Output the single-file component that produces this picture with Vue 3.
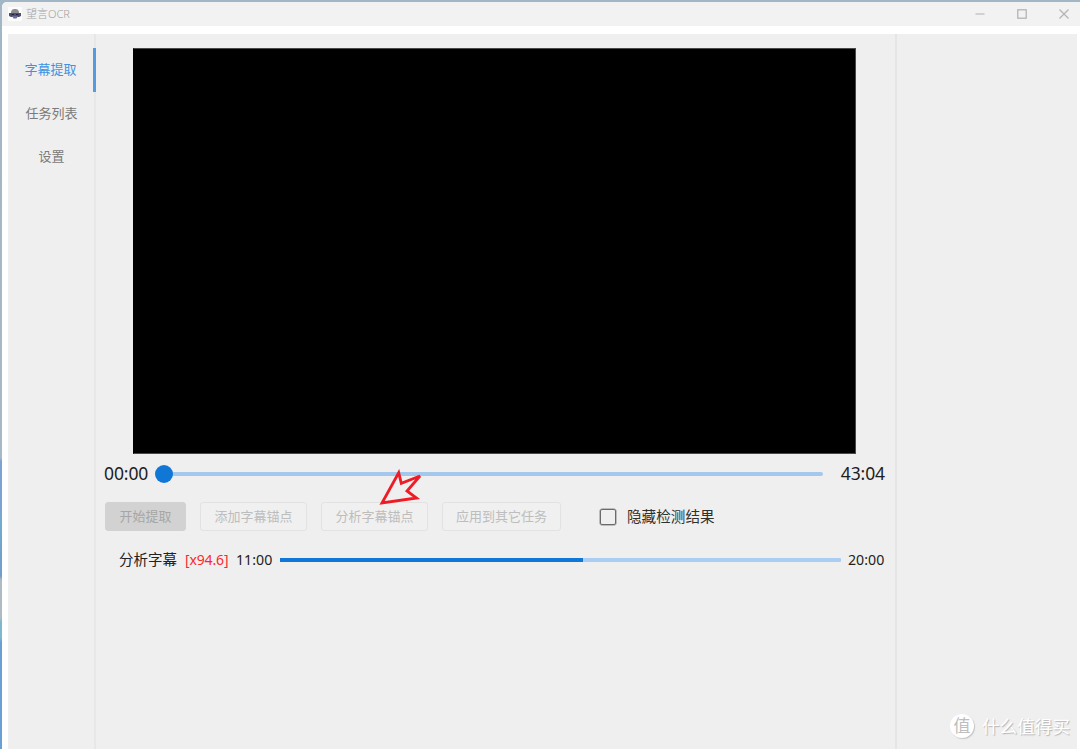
<script setup>
const nav = ['字幕提取', '任务列表', '设置']
const actions = [
  { label: '开始提取', kind: 'start' },
  { label: '添加字幕锚点', kind: 'add' },
  { label: '分析字幕锚点', kind: 'analyse' },
  { label: '应用到其它任务', kind: 'apply' },
]
const progress = 54
</script>

<template>
  <div class="desktop">
    <div class="window">
      <header class="titlebar">
        <svg class="logo" viewBox="0 0 14 14">
          <rect width="14" height="14" rx="1" fill="#fcfcfc" />
          <path d="M3 6C3 2.500 5 2 7 2s4 .5 4 4z" fill="#8d8d91" />
          <path d="M1 6h12v3l-2 1H3L1 9z" fill="#505064" />
          <path d="M4 9h6l-1.500 2.500h-3z" fill="#6d6d9c" />
          <path d="M3.500 7.500h2.500M8 7.500h2.500" stroke="#24244e" />
        </svg>
        <span class="title">望言OCR</span>
        <div class="controls">
          <svg viewBox="0 0 12 12"><path d="M1.500 6h9" stroke="#c6c6c6" /></svg>
          <svg viewBox="0 0 12 12"><rect x="1.800" y="1.800" width="8.400" height="8.400" /></svg>
          <svg viewBox="0 0 12 12"><path d="M1.500 1.500l9 9M10.500 1.500l-9 9" /></svg>
        </div>
      </header>

      <div class="body">
        <nav class="sidebar">
          <div v-for="(item, i) in nav" :key="item" class="nav-item" :class="{ active: i === 0 }">
            <span>{{ item }}</span>
          </div>
        </nav>

        <main class="main">
          <div class="video"></div>
          <div class="seek">
            <span class="time">00:00</span>
            <div class="seek-track"><i class="thumb"></i></div>
            <span class="time">43:04</span>
          </div>
          <div class="actions">
            <button v-for="a in actions" :key="a.label" class="btn" :class="a.kind" disabled>{{ a.label }}</button>
            <label class="check"><i class="box"></i><span>隐藏检测结果</span></label>
            <svg class="arrow" viewBox="0 0 44 36">
              <path d="M20.700 3.700L23.300 14.300L42 7L29 22L38.500 29L4 34Z" />
            </svg>
          </div>
          <div class="analysis">
            <span class="name">分析字幕</span>
            <span class="speed">[x94.6]</span>
            <span class="start-time">11:00</span>
            <div class="bar"><i :style="{ width: progress + '%' }"></i></div>
            <span class="end-time">20:00</span>
          </div>
        </main>
        <aside class="results"></aside>
      </div>
    </div>
    <div class="watermark"><span class="seal">值</span><span class="brand">什么值得买</span></div>
  </div>
</template>

<style>
body { overflow: hidden; }
</style>

<style scoped>
* { box-sizing: border-box; }
.desktop {
  position: relative;
  width: 1080px;
  height: 749px;
  padding: 2px 0 0 2px;
  overflow: hidden;
  background: linear-gradient(#a3b6c5 0, #a9b8c5 458px, #7da3d2 461px, #7da3d2 513px, #72accd 517px, #729dcb 576px, #b0bac2 580px, #b0bac2 618px, #7fb7cf 622px, #7fb7cf 638px, #6a9fd4 642px);
  font-family: "Noto Sans", "Noto Sans CJK SC", sans-serif;
}
.window {
  display: flex;
  flex-direction: column;
  height: 747px;
  background: #fff;
  border-radius: 5px 0 0 0;
  overflow: hidden;
}
.titlebar {
  display: flex;
  align-items: center;
  height: 24px;
  flex: none;
  background: #f2f2f2;
  padding-left: 6px;
}
.logo { width: 14px; height: 14px; margin-right: 4px; }
.title { font-size: 11px; line-height: 16px; font-weight: 300; color: #a3a3a3; }
.controls { display: flex; gap: 30px; margin-left: auto; padding-right: 10.5px; }
.controls svg { width: 12px; height: 12px; fill: none; stroke: #b4b4b4; stroke-width: 1.3; }
.body {
  display: flex;
  flex: 1;
  margin: 8px 3px 0 6px;
  background: #efefef;
}
.sidebar { width: 88px; padding-top: 14px; border-right: 2px solid #e7e7e7; flex: none; }
.nav-item {
  display: flex;
  align-items: center;
  justify-content: center;
  height: 43.5px;
  margin-right: -2px;
  padding: 0 1px 2px 0;
  font-size: 13px;
  color: #7a7a7a;
}
.nav-item.active { color: #3d93e2; border-right: 3px solid #559bdf; padding-right: 0; }
.main { width: 801px; border-right: 2px solid #e5e5e5; flex: none; }
.video {
  width: 723px;
  height: 406px;
  margin: 14px 0 0 37px;
  background: #000;
  border: 1px solid #4a4a4a;
  border-left-color: #000;
}
.seek { display: flex; align-items: center; height: 40px; padding: 0 10px 0 9px; }
.time { width: 46px; padding-bottom: 2px; font-size: 17.5px; letter-spacing: -0.1px; color: #1d1d1d; white-space: nowrap; flex: none; }
.time:first-child { margin-left: -1px; }
.time:last-child { display: flex; justify-content: flex-end; }
.seek-track {
  position: relative;
  width: 659px;
  height: 4px;
  margin: 0 auto 0 14px;
  background: #a3c8eb;
  border-radius: 2px;
}
.thumb {
  position: absolute;
  left: -9px;
  top: -7px;
  width: 18px;
  height: 18px;
  border-radius: 50%;
  background: #1177d6;
}
.actions { position: relative; display: flex; align-items: center; height: 45px; padding-left: 9px; }
.btn {
  height: 29px;
  margin: 0 14px 1px 0;
  padding: 0;
  border: 1px solid #e2e2e2;
  border-radius: 3px;
  background: #f0f0f0;
  color: #bdbdbd;
  font-family: inherit;
  font-size: 13px;
  line-height: 25px;
  white-space: nowrap;
  flex: none;
}
.start { width: 81px; background: #d2d2d2; border-color: #d2d2d2; color: #a6a6a6; }
.add { width: 107px; }
.analyse { width: 107px; }
.apply { width: 119px; margin-right: 0; }
.check { display: flex; align-items: center; margin-left: 39px; font-size: 14.6px; color: #303030; }
.check span { padding-bottom: 2px; }
.box { width: 16px; height: 16px; margin-right: 11px; border: 1.5px solid #6b6b6b; border-radius: 2px; box-shadow: 0 0 0 0.5px #8a8a8a; }
.arrow { position: absolute; left: 282px; top: -25px; width: 44px; height: 36px; fill: none; stroke: #ee1c25; stroke-width: 2.8; }
.analysis { display: flex; align-items: center; height: 41px; padding-left: 23px; font-size: 14.5px; color: #222; white-space: nowrap; }
.name { width: 66px; padding-bottom: 2px; }
.speed { width: 51px; color: #fb2830; font-size: 14px; letter-spacing: -0.15px; }
.start-time, .end-time { font-size: 14.2px; letter-spacing: 0; }
.start-time { width: 44px; }
.bar { width: 561px; height: 4px; background: #a9cef2; border-radius: 1px; }
.bar i { display: block; height: 4px; background: #1177d6; }
.end-time { margin-left: 7px; }
.watermark {
  position: absolute;
  right: 10px;
  bottom: 10px;
  display: flex;
  align-items: center;
  color: #fff;
}
.seal {
  width: 24px;
  height: 24px;
  margin-right: 8px;
  border-radius: 50%;
  background: #fff;
  box-shadow: 1px 1px 1px #c4c4c4;
  color: #bdbdbd;
  font-size: 17px;
  line-height: 23px;
  text-align: center;
}
.brand { font-size: 17.6px; line-height: 26px; text-shadow: 1px 1px 1px #b5b5b5; }
</style>
